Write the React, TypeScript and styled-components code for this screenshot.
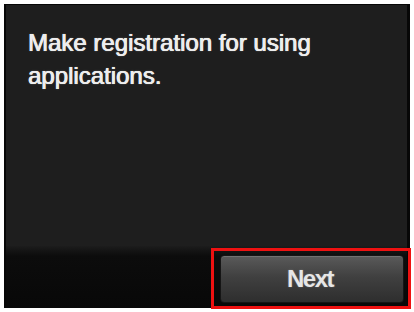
import React from "react";
import styled, { createGlobalStyle } from "styled-components";

const Global = createGlobalStyle`
  html, body { margin: 0; padding: 0; background: #ffffff; }
  body { width: 414px; height: 312px; overflow: hidden; }
`;

const Page = styled.div`
  width: 414px;
  height: 312px;
  padding: 4px;
  box-sizing: border-box;
  background: #ffffff;
`;

const Screen = styled.div`
  width: 406px;
  height: 304px;
  box-sizing: border-box;
  border-left: 2px solid #070707;
  border-top: 1px solid #070707;
  border-right: 3px solid #070707;
  background: #1e1e1e;
  display: flex;
  flex-direction: column;
`;

const Message = styled.div`
  flex: 1;
  padding: 21px 0 0 22px;
  font-family: "Liberation Sans", Arial, sans-serif;
  font-weight: 400;
  font-size: 24px;
  line-height: 33px;
  color: #ededed;
  text-shadow: 0.4px 0 0 #ededed, -0.3px 0 0 #ededed, 0 0 2px rgba(255, 255, 255, 0.3);
`;

const BottomBar = styled.div`
  height: 62px;
  display: flex;
  justify-content: flex-end;
  align-items: flex-end;
  background: linear-gradient(to bottom, #1c1c1c 0px, #0c0c0c 10px, #080808 100%);
`;

const Highlight = styled.div`
  width: 200px;
  height: 61px;
  box-sizing: border-box;
  border: 3px solid #ee1111;
  margin: 0 -4px -1px 0;
  padding: 4px 4px 3px 6px;
  display: flex;
`;

const NextButton = styled.div`
  flex: 1;
  border-radius: 4px;
  border: 1px solid #151515;
  background: linear-gradient(to bottom, #5a5a5a 0%, #404040 45%, #2e2e2e 100%);
  box-shadow: inset 0 1px 0 rgba(255, 255, 255, 0.14);
  display: flex;
  align-items: center;
  justify-content: center;
  padding-right: 4px;
  font-family: "Liberation Sans", Arial, sans-serif;
  font-weight: 700;
  font-size: 24px;
  letter-spacing: -1.5px;
  color: #e6e6e6;
  text-shadow: 0 0 2px rgba(255, 255, 255, 0.25);
`;

export default function App() {
  return (
    <>
      <Global />
      <Page>
        <Screen>
          <Message>
            Make registration for using
            <br />
            applications.
          </Message>
          <BottomBar>
            <Highlight>
              <NextButton>Next</NextButton>
            </Highlight>
          </BottomBar>
        </Screen>
      </Page>
    </>
  );
}
